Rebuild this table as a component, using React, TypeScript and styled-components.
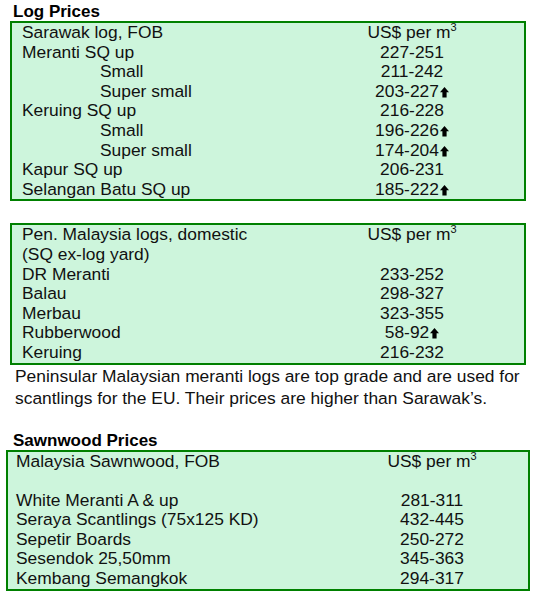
import React from "react";
import styled, { createGlobalStyle } from "styled-components";

const Global = createGlobalStyle`
  html, body { margin: 0; padding: 0; background: #ffffff; }
  body { font-family: "Liberation Sans", Arial, sans-serif; color: #111111; }
`;

const Page = styled.div`
  width: 536px;
  height: 599px;
  overflow: hidden;
  display: flex;
  flex-direction: column;
  padding-top: 2px;
  box-sizing: border-box;
`;

const Heading = styled.h2<{ $top?: number }>`
  margin: ${(p) => p.$top ?? 0}px 0 0 13px;
  font-size: 17px;
  font-weight: bold;
  line-height: 19px;
  color: #000;
`;

const Box = styled.div<{ $left: number; $width: number; $top?: number; $pad: number; $cols: string }>`
  margin: ${(p) => p.$top ?? 0}px 0 0 ${(p) => p.$left}px;
  width: ${(p) => p.$width}px;
  box-sizing: border-box;
  border: 2px solid #008000;
  background: #cdf5dc;
  display: grid;
  grid-template-columns: ${(p) => p.$cols};
  grid-auto-rows: 19.6px;
  padding-left: ${(p) => p.$pad}px;
  font-size: 17.4px;
  line-height: 19.6px;
`;

const Label = styled.div<{ $indent?: boolean }>`
  padding-left: ${(p) => (p.$indent ? 78 : 0)}px;
  white-space: nowrap;
`;

const Value = styled.div`
  text-align: center;
  white-space: nowrap;
`;

const Sup = styled.sup`
  font-size: 11px;
  line-height: 0;
  vertical-align: 7px;
`;

const Arrow = styled.svg`
  width: 9px;
  height: 11px;
  margin-left: 1px;
  vertical-align: -1px;
`;

const Para = styled.p`
  margin: 0 0 0 15px;
  font-size: 17.4px;
  line-height: 22px;
  width: 518px;
  color: #111;
`;

const Up = () => (
  <Arrow viewBox="0 0 9 11">
    <path d="M4.5 0 L9 5.2 L6.6 5.2 L6.6 10.5 L2.4 10.5 L2.4 5.2 L0 5.2 Z" fill="#000" />
  </Arrow>
);

type Row = { label: string; value: string; indent?: boolean; up?: boolean };

const unit = (
  <>
    US$ per m<Sup>3</Sup>
  </>
);

const sarawak: Row[] = [
  { label: "Meranti SQ up", value: "227-251" },
  { label: "Small", value: "211-242", indent: true },
  { label: "Super small", value: "203-227", indent: true, up: true },
  { label: "Keruing SQ up", value: "216-228" },
  { label: "Small", value: "196-226", indent: true, up: true },
  { label: "Super small", value: "174-204", indent: true, up: true },
  { label: "Kapur SQ up", value: "206-231" },
  { label: "Selangan Batu SQ up", value: "185-222", up: true },
];

const pen: Row[] = [
  { label: "DR Meranti", value: "233-252" },
  { label: "Balau", value: "298-327" },
  { label: "Merbau", value: "323-355" },
  { label: "Rubberwood", value: "58-92", up: true },
  { label: "Keruing", value: "216-232" },
];

const sawn: Row[] = [
  { label: "White Meranti A & up", value: "281-311" },
  { label: "Seraya Scantlings (75x125 KD)", value: "432-445" },
  { label: "Sepetir Boards", value: "250-272" },
  { label: "Sesendok 25,50mm", value: "345-363" },
  { label: "Kembang Semangkok", value: "294-317" },
];

const Rows = ({ rows }: { rows: Row[] }) => (
  <>
    {rows.map((r, i) => (
      <React.Fragment key={i}>
        <Label $indent={r.indent}>{r.label}</Label>
        <Value>
          {r.value}
          {r.up && <Up />}
        </Value>
      </React.Fragment>
    ))}
  </>
);

export default function App() {
  return (
    <>
      <Global />
      <Page>
        <Heading>Log Prices</Heading>
        <Box $left={10} $width={516} $pad={10} $cols="278px 224px">
          <Label>Sarawak log, FOB</Label>
          <Value>{unit}</Value>
          <Rows rows={sarawak} />
        </Box>
        <Box $left={10} $width={516} $top={22} $pad={10} $cols="278px 224px">
          <Label>Pen. Malaysia logs, domestic</Label>
          <Value>{unit}</Value>
          <Label>(SQ ex-log yard)</Label>
          <Value />
          <Rows rows={pen} />
        </Box>
        <Para>
          Peninsular Malaysian meranti logs are top grade and are used for scantlings for the EU.
          Their prices are higher than Sarawak’s.
        </Para>
        <Heading $top={22}>Sawnwood Prices</Heading>
        <Box $left={6} $width={524} $pad={8} $cols="320px 192px">
          <Label>Malaysia Sawnwood, FOB</Label>
          <Value>{unit}</Value>
          <Label />
          <Value />
          <Rows rows={sawn} />
        </Box>
      </Page>
    </>
  );
}
